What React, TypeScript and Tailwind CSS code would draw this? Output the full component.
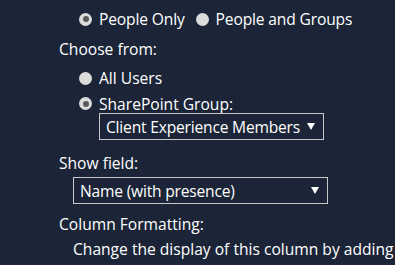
import React from "react";

function Radio({ checked }: { checked?: boolean }) {
  return (
    <span className="grid h-[13px] w-[13px] shrink-0 place-items-center rounded-full bg-[#dcdcdc]">
      {checked && <span className="h-[6px] w-[6px] rounded-full bg-[#5a5a5a]" />}
    </span>
  );
}

function Arrow() {
  return (
    <svg width="8" height="7" viewBox="0 0 8 7" className="shrink-0">
      <polygon points="0,0 8,0 4,7" fill="#ffffff" />
    </svg>
  );
}

function Select({ label, width, className }: { label: string; width: string; className: string }) {
  return (
    <div
      className={`flex h-[27px] items-center justify-between border border-[#c8c8c8] pl-[6px] pr-[8px] ${width} ${className}`}
    >
      <span className="tracking-[-0.2px] whitespace-nowrap">{label}</span>
      <Arrow />
    </div>
  );
}

export default function App() {
  return (
    <div
      className="h-[265px] w-[395px] overflow-hidden bg-[#1b2537] text-[15.6px] leading-[20px] text-white"
      style={{ fontFamily: '"Open Sans", "Noto Sans", sans-serif' }}
    >
      <div className="flex flex-col pl-[59px] pt-[9px]">
        {/* Account type */}
        <div className="ml-[20px] flex h-[20px] items-center tracking-[-0.15px]">
          <Radio checked />
          <span className="ml-[7px]">People Only</span>
          <span className="ml-[11px]">
            <Radio />
          </span>
          <span className="ml-[7px]">People and Groups</span>
        </div>

        <div className="mt-[10px]">Choose from:</div>

        <div className="ml-[20px] mt-[9px] flex h-[20px] items-center gap-[7px]">
          <Radio />
          <span>All Users</span>
        </div>
        <div className="ml-[20px] mt-[6px] flex h-[19px] items-center gap-[7px]">
          <Radio checked />
          <span>SharePoint Group:</span>
        </div>
        <Select label="Client Experience Members" width="w-[225px]" className="ml-[40px]" />

        <div className="mt-[13px]">Show field:</div>
        <Select label="Name (with presence)" width="w-[255px]" className="ml-[14px] mt-[4px]" />

        <div className="mt-[10px]">Column Formatting:</div>
        <div className="ml-[14px] mt-[5px] whitespace-nowrap">
          Change the display of this column by adding
        </div>
      </div>
    </div>
  );
}
